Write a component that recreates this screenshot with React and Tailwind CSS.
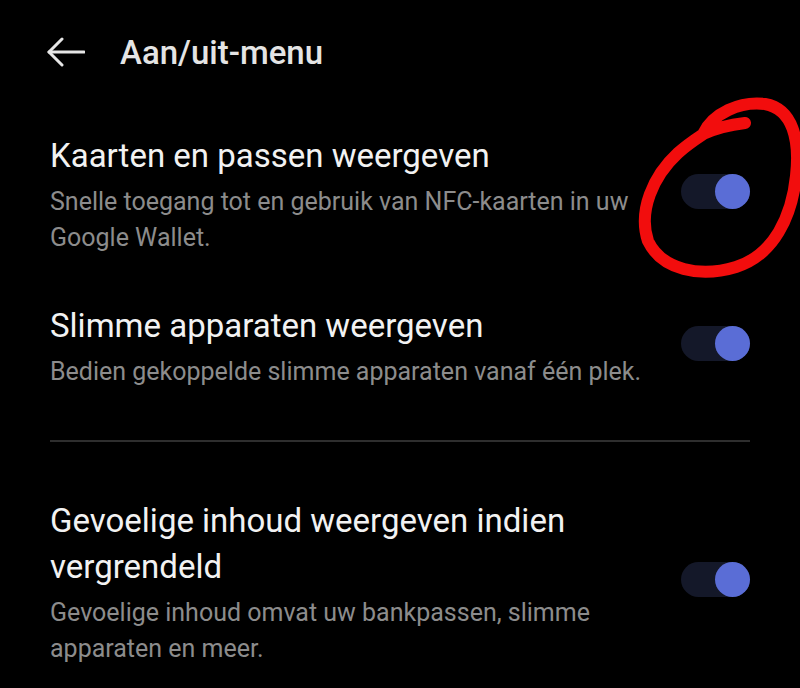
import React from "react";

function Toggle() {
  return (
    <div className="relative w-[69px] h-[35px] shrink-0 rounded-full bg-[#141829]">
      <div className="absolute right-0 top-0 w-[35px] h-[35px] rounded-full bg-[#5a6dd6]" />
    </div>
  );
}

function Item({ title, subtitle, className = "" }) {
  return (
    <div className={"flex items-center pl-[50px] pr-[50px] " + className}>
      <div className="w-[600px]">
        <div className="text-[33px] leading-[46px] text-[#f2f2f2]">{title}</div>
        <div className="mt-[5px] text-[25px] leading-[36px] text-[#8c8c8c]">{subtitle}</div>
      </div>
      <div className="ml-auto mb-[6px]">
        <Toggle />
      </div>
    </div>
  );
}

export default function App() {
  return (
    <div className="relative w-[800px] h-[688px] overflow-hidden bg-black font-['Roboto',sans-serif]">
      <div className="flex h-[104px] items-center pl-[47px]">
        <svg width="38" height="30" viewBox="0 0 38 30" fill="none" stroke="#e6e6e6" strokeWidth="3" strokeLinecap="round" strokeLinejoin="round">
          <path d="M37 15H2" />
          <path d="M15 2L2 15L15 28" />
        </svg>
        <div className="ml-[35px] text-[33px] font-medium leading-none text-[#e4e4e4]">Aan/uit-menu</div>
      </div>
      <Item
        className="mt-[29px]"
        title="Kaarten en passen weergeven"
        subtitle="Snelle toegang tot en gebruik van NFC-kaarten in uw Google Wallet."
      />
      <Item
        className="mt-[47px]"
        title="Slimme apparaten weergeven"
        subtitle="Bedien gekoppelde slimme apparaten vanaf één plek."
      />
      <div className="mx-[50px] mt-[50px] h-[2px] bg-[#2e2e2e]" />
      <Item
        className="mt-[56px]"
        title="Gevoelige inhoud weergeven indien vergrendeld"
        subtitle="Gevoelige inhoud omvat uw bankpassen, slimme apparaten en meer."
      />
      <svg className="pointer-events-none absolute inset-0" width="800" height="688" viewBox="0 0 800 688" fill="none">
        <path
          d="M745 123 C728 125 714 129 703 134 C713 113 740 101 765 104 C793 109 800 140 796 176 C792 216 774 255 736 267 C700 278 662 270 648 241 C638 211 653 176 678 153 C688 144 696 139 705 133"
          stroke="#f20d0d"
          strokeWidth="12"
          strokeLinecap="round"
          strokeLinejoin="round"
        />
      </svg>
    </div>
  );
}
